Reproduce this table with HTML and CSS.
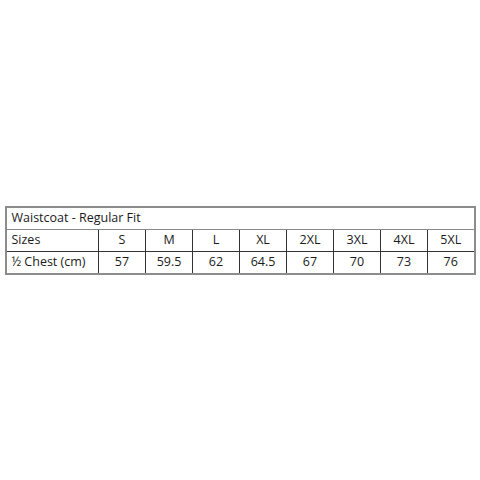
FILE: index.html
```html
<!DOCTYPE html>
<html>
<head>
<meta charset="utf-8">
<link rel="stylesheet" href="styles.css">
</head>
<body>
<div class="page">
<table class="sizes">
  <colgroup>
    <col class="c-label"><col><col><col><col><col><col><col><col>
  </colgroup>
  <tr class="title"><td colspan="9">Waistcoat - Regular Fit</td></tr>
  <tr class="head">
    <td class="label">Sizes</td><td>S</td><td>M</td><td>L</td><td>XL</td><td>2XL</td><td>3XL</td><td>4XL</td><td>5XL</td>
  </tr>
  <tr class="data">
    <td class="label">½ Chest (cm)</td><td>57</td><td>59.5</td><td>62</td><td>64.5</td><td>67</td><td>70</td><td>73</td><td>76</td>
  </tr>
</table>
</div>
</body>
</html>
```
FILE: styles.css
```css
html, body { margin: 0; padding: 0; background: #fff; }
.page {
  width: 480px; height: 480px;
  display: flex; align-items: center; justify-content: center;
  font-family: "Open Sans", "Liberation Sans", sans-serif;
}
.sizes {
  border-collapse: collapse;
  width: 471px;
  table-layout: fixed;
  border: 2px solid #8c8c8c;
  color: #1a1a1a;
  font-size: 12.5px;
  margin-top: 0;
}
.sizes col.c-label { width: 93px; }
.sizes td {
  height: 21px;
  padding: 0;
  border: 1px solid #333;
  text-align: center;
  line-height: 20px;
  white-space: nowrap;
}
.sizes tr.title td {
  text-align: left;
  padding-left: 5px;
  border-bottom: 1px solid #888;
}
.sizes td.label {
  text-align: left;
  padding-left: 5px;
}
```
